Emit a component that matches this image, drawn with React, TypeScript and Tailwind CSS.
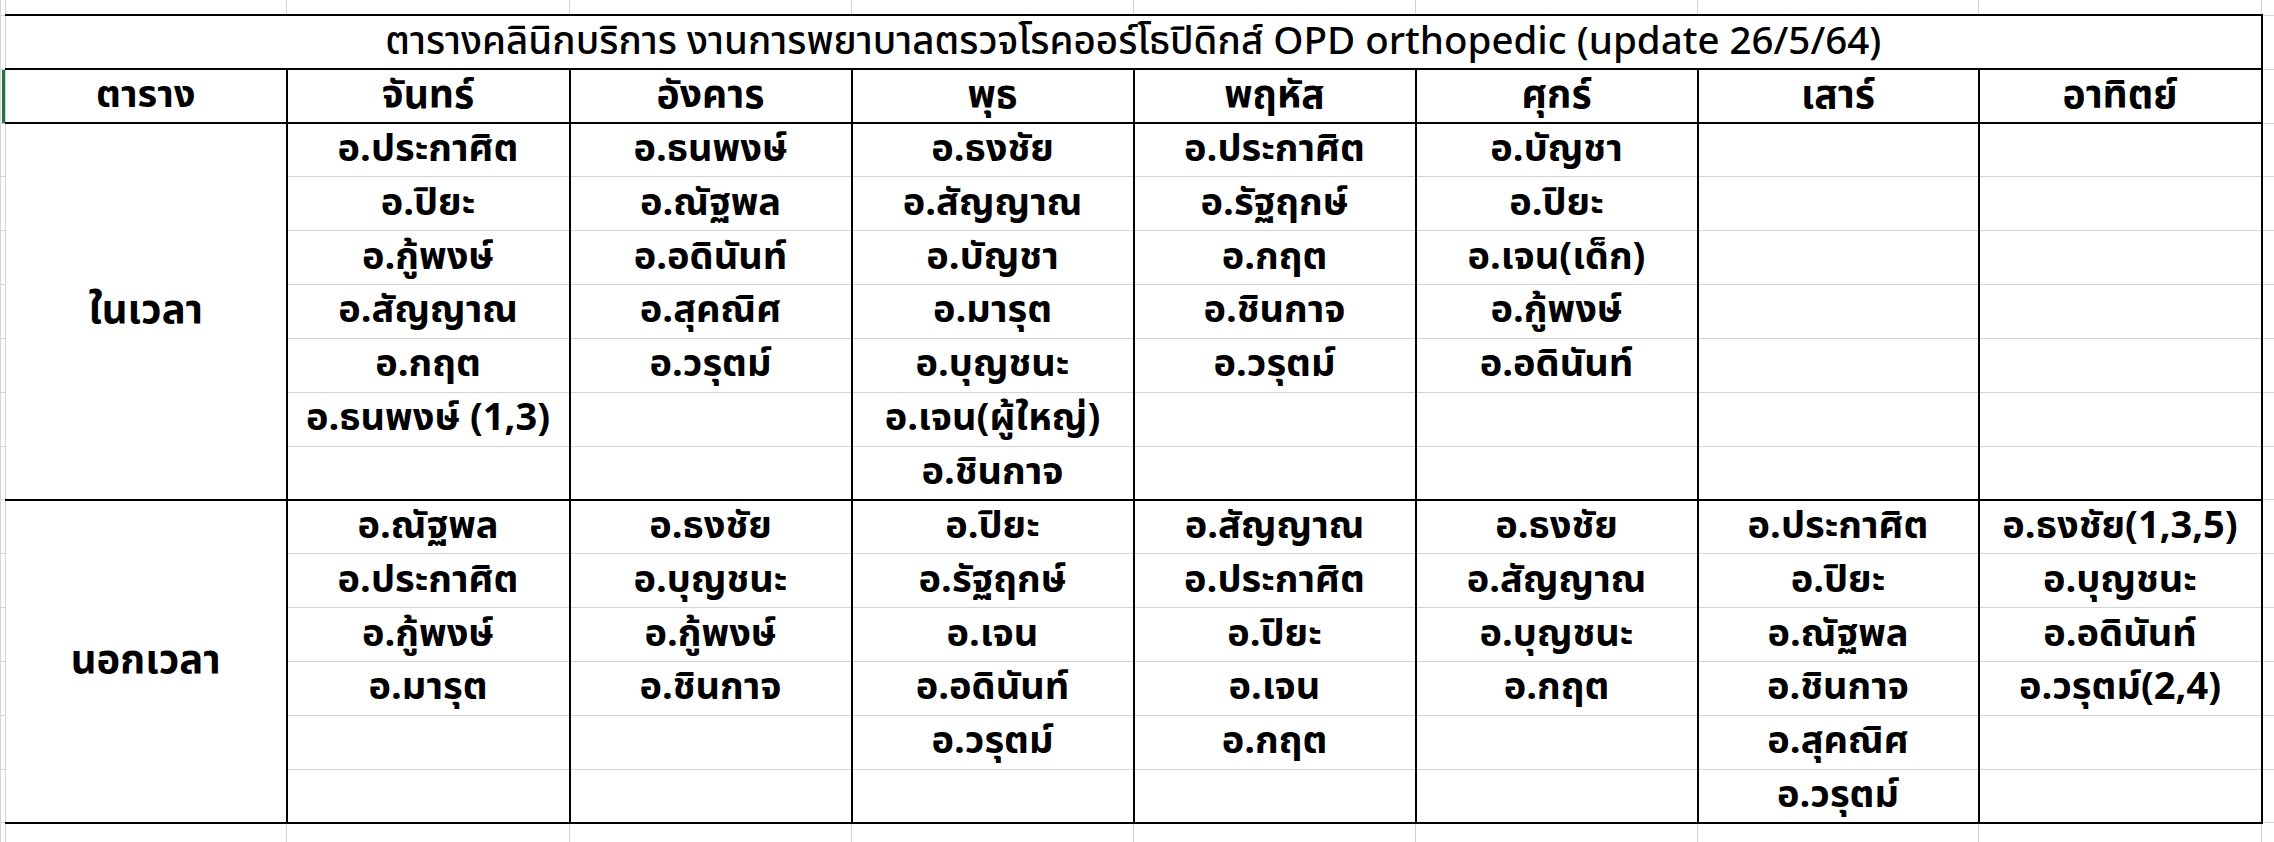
import React from 'react';

const days = ['จันทร์', 'อังคาร', 'พุธ', 'พฤหัส', 'ศุกร์', 'เสาร์', 'อาทิตย์'];

// one list per day, one entry per spreadsheet row
const inHours: string[][] = [
  ['อ.ประกาศิต', 'อ.ปิยะ', 'อ.กู้พงษ์', 'อ.สัญญาณ', 'อ.กฤต', 'อ.ธนพงษ์ (1,3)', ''],
  ['อ.ธนพงษ์', 'อ.ณัฐพล', 'อ.อดินันท์', 'อ.สุคณิศ', 'อ.วรุตม์', '', ''],
  ['อ.ธงชัย', 'อ.สัญญาณ', 'อ.บัญชา', 'อ.มารุต', 'อ.บุญชนะ', 'อ.เจน(ผู้ใหญ่)', 'อ.ชินกาจ'],
  ['อ.ประกาศิต', 'อ.รัฐฤกษ์', 'อ.กฤต', 'อ.ชินกาจ', 'อ.วรุตม์', '', ''],
  ['อ.บัญชา', 'อ.ปิยะ', 'อ.เจน(เด็ก)', 'อ.กู้พงษ์', 'อ.อดินันท์', '', ''],
  ['', '', '', '', '', '', ''],
  ['', '', '', '', '', '', ''],
];

const outHours: string[][] = [
  ['อ.ณัฐพล', 'อ.ประกาศิต', 'อ.กู้พงษ์', 'อ.มารุต', '', ''],
  ['อ.ธงชัย', 'อ.บุญชนะ', 'อ.กู้พงษ์', 'อ.ชินกาจ', '', ''],
  ['อ.ปิยะ', 'อ.รัฐฤกษ์', 'อ.เจน', 'อ.อดินันท์', 'อ.วรุตม์', ''],
  ['อ.สัญญาณ', 'อ.ประกาศิต', 'อ.ปิยะ', 'อ.เจน', 'อ.กฤต', ''],
  ['อ.ธงชัย', 'อ.สัญญาณ', 'อ.บุญชนะ', 'อ.กฤต', '', ''],
  ['อ.ประกาศิต', 'อ.ปิยะ', 'อ.ณัฐพล', 'อ.ชินกาจ', 'อ.สุคณิศ', 'อ.วรุตม์'],
  ['อ.ธงชัย(1,3,5)', 'อ.บุญชนะ', 'อ.อดินันท์', 'อ.วรุตม์(2,4)', '', ''],
];

const colWidths = [5, 281, 283, 282, 282, 282, 282, 281, 283, 13];

const grid = 'border border-[#d4d4d4] p-0';
const stub = `${grid}`;

const DayCell: React.FC<{ text: string; first: boolean; last: boolean }> = ({ text, first, last }) => (
  <td
    className={`${grid} border-x-2 border-x-black text-center align-middle text-[38px] font-bold leading-none whitespace-nowrap ${
      first ? 'border-t-2 border-t-black' : ''
    } ${last ? 'border-b-2 border-b-black' : ''}`}
  >
    {text}
  </td>
);

const SpanCell: React.FC<{ label: string; rows: number }> = ({ label, rows }) => (
  <td
    rowSpan={rows}
    className={`${grid} border-y-2 border-r-2 border-y-black border-r-black text-center align-middle text-[40px] font-bold leading-none`}
  >
    {label}
  </td>
);

const App: React.FC = () => {
  return (
    <div
      className="w-[2274px] h-[842px] overflow-hidden bg-white text-black"
      style={{ fontFamily: '"Noto Sans Thai", "Leelawadee UI", Tahoma, Lato, "Noto Sans", sans-serif' }}
    >
      <table className="table-fixed border-collapse w-[2274px]">
        <colgroup>
          {colWidths.map((w, i) => (
            <col key={i} style={{ width: w }} />
          ))}
        </colgroup>
        <tbody>
          {/* partial row above the sheet */}
          <tr className="h-[15px]">
            {colWidths.map((_, i) => (
              <td key={i} className={`${grid} border-t-0`} />
            ))}
          </tr>

          {/* title */}
          <tr className="h-[54px]">
            <td className={stub} />
            <td
              colSpan={8}
              className={`${grid} border-y-2 border-r-2 border-y-black border-r-black text-center align-middle text-[38.5px] font-medium leading-none whitespace-nowrap`}
            >
              ตารางคลินิกบริการ งานการพยาบาลตรวจโรคออร์โธปิดิกส์ OPD orthopedic (update 26/5/64)
            </td>
            <td className={stub} />
          </tr>

          {/* day header */}
          <tr className="h-[54px]">
            <td className={`${stub} relative`}>
              <div className="absolute right-0 top-0 bottom-0 w-[3px] bg-[#217346]" />
            </td>
            <td className={`${grid} border-y-2 border-r-2 border-y-black border-r-black text-center align-middle text-[38px] font-bold leading-none`}>
              ตาราง
            </td>
            {days.map(d => (
              <td
                key={d}
                className={`${grid} border-y-2 border-x-2 border-y-black border-x-black text-center align-middle text-[39px] font-bold leading-none`}
              >
                {d}
              </td>
            ))}
            <td className={stub} />
          </tr>

          {/* ในเวลา */}
          {Array.from({ length: 7 }).map((_, r) => (
            <tr key={`in-${r}`} className="h-[53.85px]">
              <td className={stub} />
              {r === 0 && <SpanCell label="ในเวลา" rows={7} />}
              {inHours.map((col, c) => (
                <DayCell key={c} text={col[r]} first={r === 0} last={r === 6} />
              ))}
              <td className={stub} />
            </tr>
          ))}

          {/* นอกเวลา */}
          {Array.from({ length: 6 }).map((_, r) => (
            <tr key={`out-${r}`} className="h-[53.85px]">
              <td className={stub} />
              {r === 0 && <SpanCell label="นอกเวลา" rows={6} />}
              {outHours.map((col, c) => (
                <DayCell key={c} text={col[r]} first={r === 0} last={r === 5} />
              ))}
              <td className={stub} />
            </tr>
          ))}

          {/* partial row below the sheet */}
          <tr className="h-[19px]">
            {colWidths.map((_, i) => (
              <td key={i} className={`${grid} border-b-0`} />
            ))}
          </tr>
        </tbody>
      </table>
    </div>
  );
};

export default App;
